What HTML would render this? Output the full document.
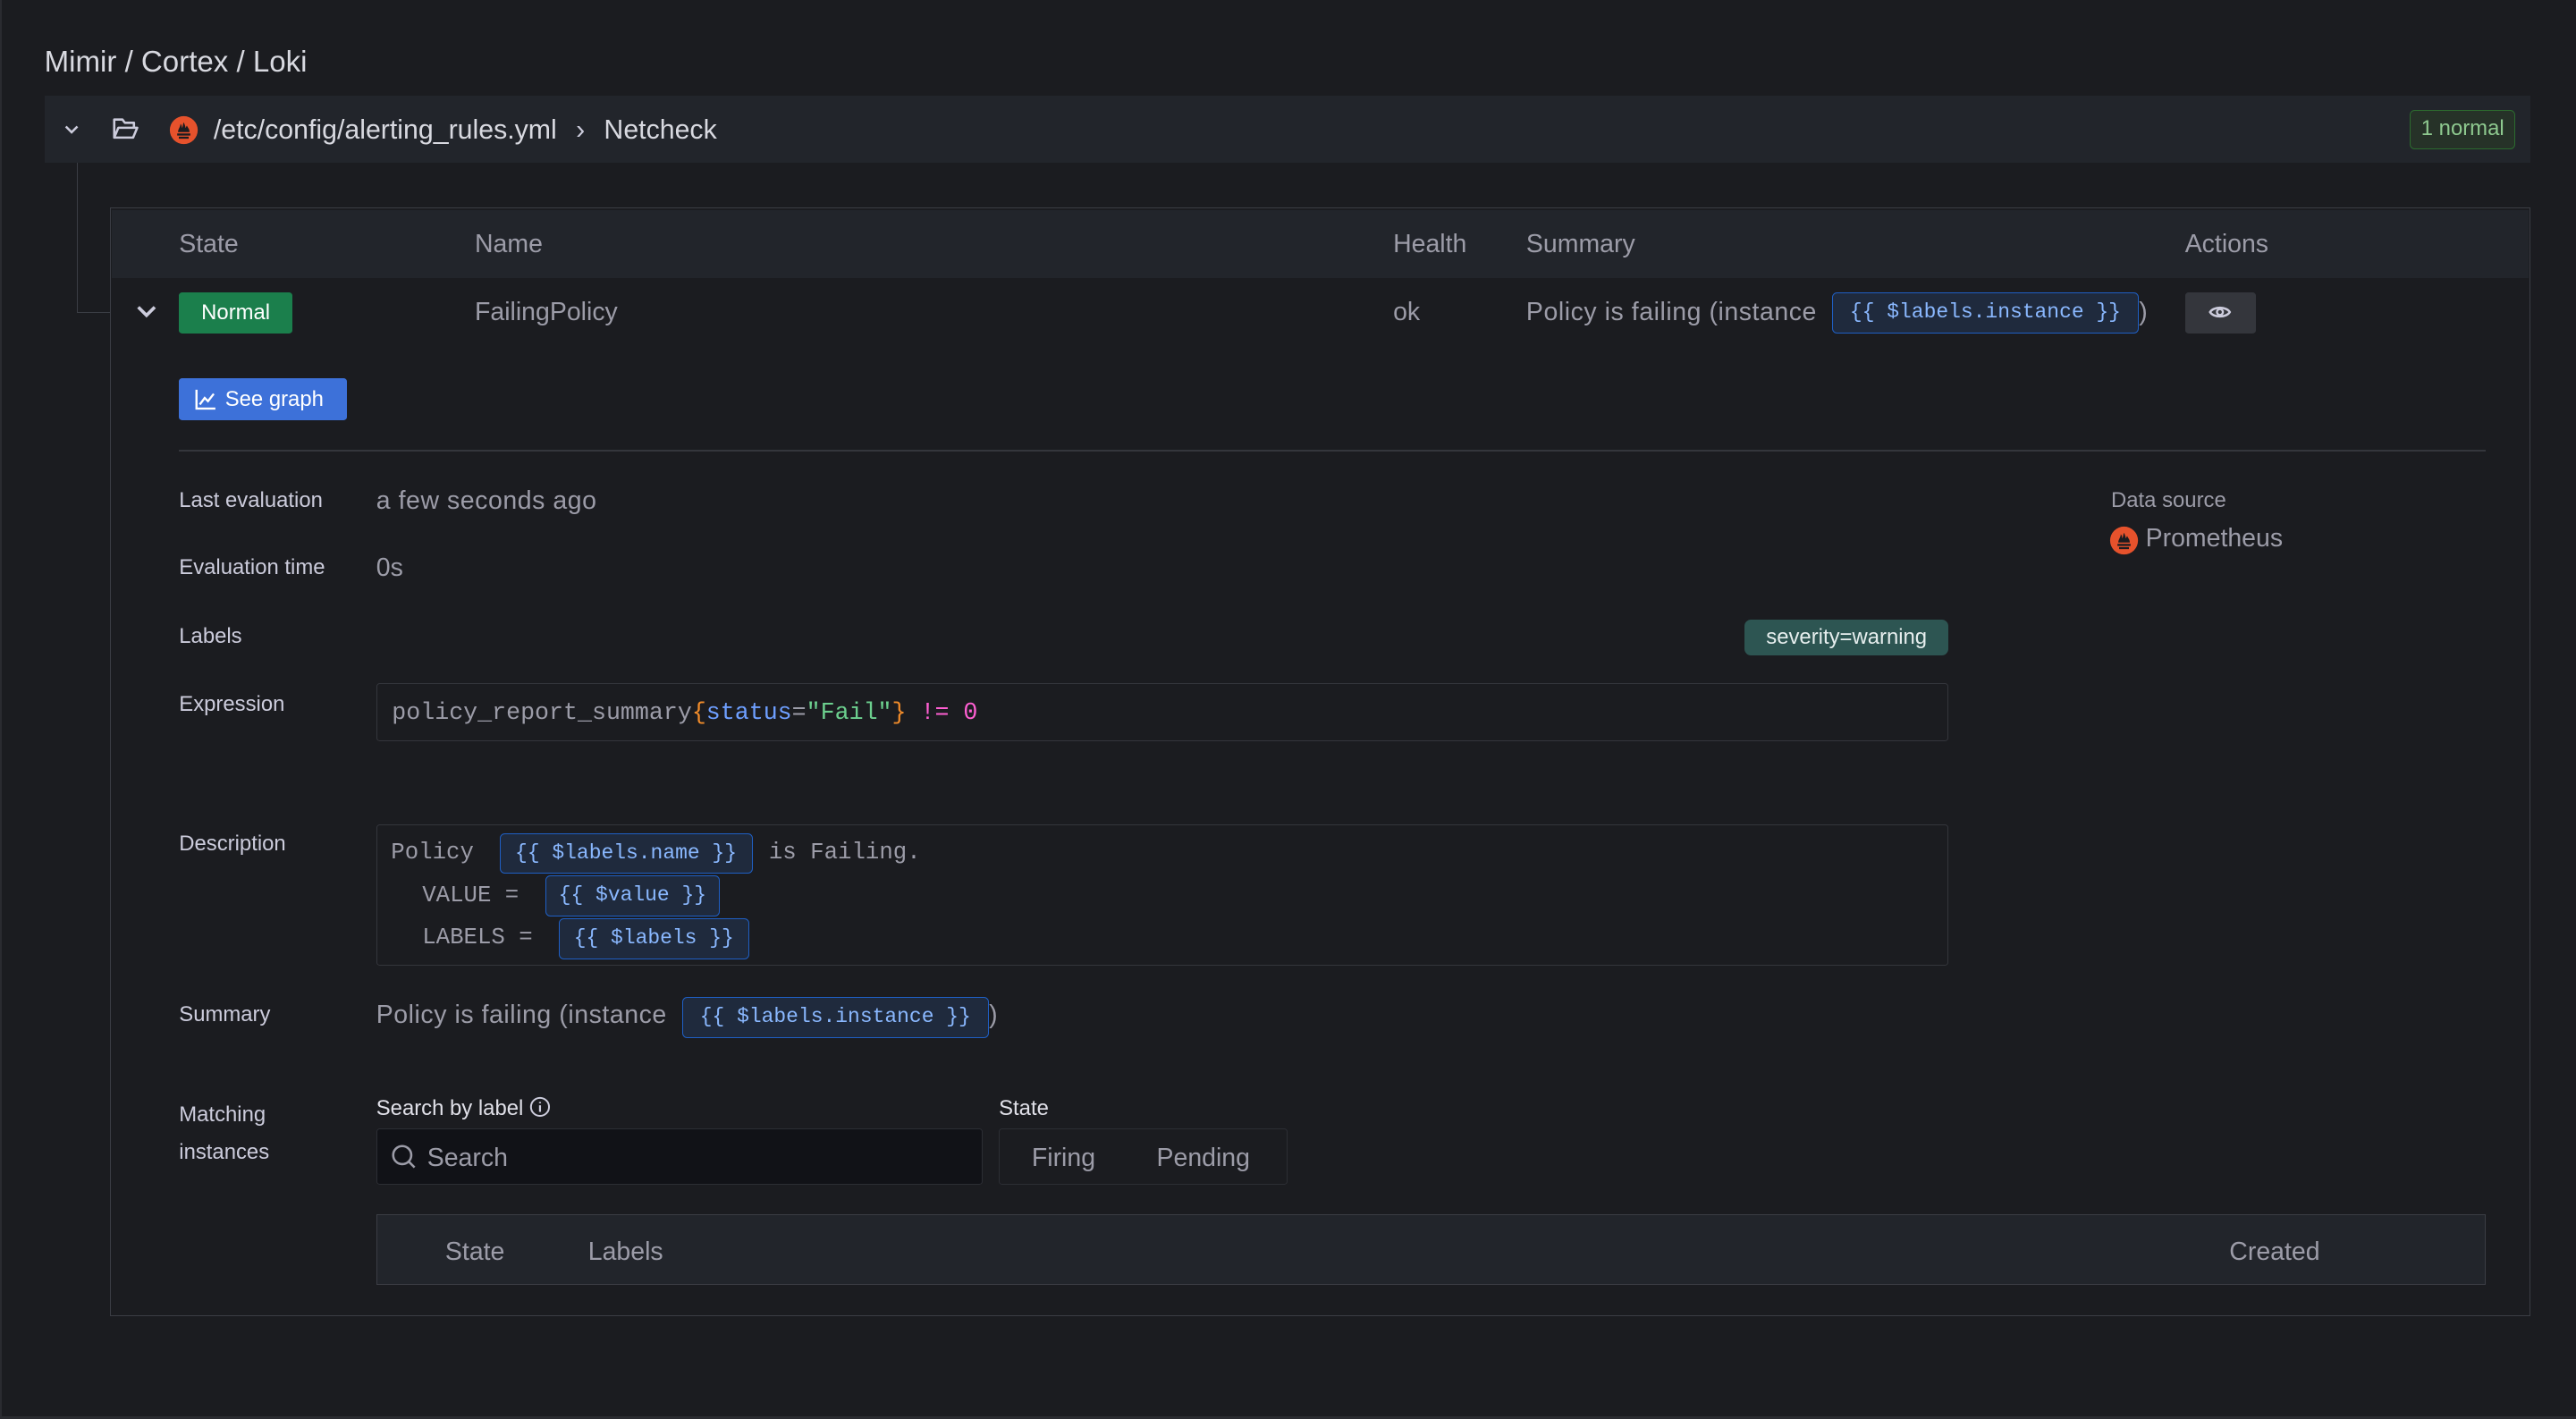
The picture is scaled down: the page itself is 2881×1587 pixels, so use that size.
<!DOCTYPE html>
<html><head><meta charset="utf-8"><style>
html,body{margin:0;padding:0;background:#1b1c20;overflow:hidden}
#root{position:relative;width:1568px;height:864px;zoom:1.83737;font-family:"Liberation Sans",sans-serif;color:#ccccdc;background:#1b1c20}
.a{position:absolute;white-space:nowrap}
.lbl{font-size:13px;color:#ccccdc}
.val{font-size:15.5px;color:#9c9ca8}
.hd{font-size:15.5px;color:#9c9ca8}
.mono{font-family:"Liberation Mono",monospace}
.chip{position:absolute;background:#1f2a3d;border:1px solid #1f5fc4;border-radius:3px;color:#8ab8ff;font-family:"Liberation Mono",monospace;font-size:12.5px;line-height:23px;height:25px;text-align:center;box-sizing:border-box;white-space:nowrap;overflow:hidden}
</style></head><body><div id="root">
<div class="a" style="left:0;top:0;width:1px;height:864px;background:#2a2b30"></div>
<div class="a" style="left:27px;top:28px;font-size:18px;color:#d8d9e0">Mimir / Cortex / Loki</div>
<div class="a" style="left:27px;top:58px;width:1513px;height:41px;background:#22252b"></div>
<svg class="a" style="left:38px;top:74px" width="11" height="10" viewBox="0 0 11 10"><path d="M2 3l3.5 3.5L9 3" stroke="#ccccdc" stroke-width="1.4" fill="none"/></svg>
<svg class="a" style="left:68px;top:71px" width="17" height="15" viewBox="0 0 17 15"><path d="M1.5 13V2h5l1.5 2h5.5v3M1.5 13l2.5-6h11.5l-2.5 6z" stroke="#ccccdc" stroke-width="1.4" fill="none" stroke-linejoin="round"/></svg>
<svg class="a" style="left:103px;top:70px" width="18" height="18" viewBox="0 0 18 18"><circle cx="9" cy="9" r="8.5" fill="#e6522c"/><path d="M5 11h8v1.3H5zM6 13h6v1.2H6zM5.5 10.2c0-2 1.5-3 1.5-5 1 1 .7 2 1 2.5.5-1 .4-2.5 1-3.5.5 1.5 1 2 1 3.5.5-.5.5-1 .9-1.5.6 1.5 1.6 2 1.6 4z" fill="#1b1c20"/></svg>
<div class="a" style="left:130px;top:70px;font-size:16.5px;color:#d8d9e0">/etc/config/alerting_rules.yml <span style="margin:0 7px;color:#ccccdc">›</span> Netcheck</div>
<div class="a" style="left:1467px;top:67px;width:64px;height:24px;box-sizing:border-box;border:1px solid #2c6b2f;background:#263228;border-radius:3px;color:#8ec98f;font-size:13px;line-height:22px;text-align:center">1 normal</div>
<div class="a" style="left:47px;top:99px;width:20px;height:91px;border-left:1px solid #3a3d44;border-bottom:1px solid #3a3d44"></div>
<div class="a" style="left:67px;top:126px;width:1473px;height:675px;box-sizing:border-box;border:1px solid #3b3d44"></div>
<div class="a" style="left:68px;top:128px;width:1471px;height:41px;background:#22252b"></div>
<div class="a hd" style="left:109px;top:140px">State</div>
<div class="a hd" style="left:289px;top:140px">Name</div>
<div class="a hd" style="left:848px;top:140px">Health</div>
<div class="a hd" style="left:929px;top:140px">Summary</div>
<div class="a hd" style="left:1330px;top:140px">Actions</div>
<svg class="a" style="left:82px;top:184px" width="14" height="12" viewBox="0 0 14 12"><path d="M2 3l5 5 5-5" stroke="#ccccdc" stroke-width="2" fill="none"/></svg>
<div class="a" style="left:109px;top:178px;width:69px;height:25px;background:#1b7f4c;border-radius:2px;color:#fff;font-size:13px;line-height:25px;text-align:center">Normal</div>
<div class="a val" style="left:289px;top:181px">FailingPolicy</div>
<div class="a val" style="left:848px;top:181px">ok</div>
<div class="a val" style="left:929px;top:181px;letter-spacing:0.3px">Policy is failing (instance</div>
<div class="chip" style="left:1115px;top:178px;width:187px">{{ $labels.instance }}</div>
<div class="a val" style="left:1302px;top:181px">)</div>
<div class="a" style="left:1330px;top:178px;width:43px;height:25px;background:#34363c;border-radius:2px"></div>
<svg class="a" style="left:1344px;top:184px" width="15" height="12" viewBox="0 0 15 12"><path d="M1.5 6c2-3.5 10-3.5 12 0-2 3.5-10 3.5-12 0z" stroke="#ccccdc" stroke-width="1.4" fill="none"/><circle cx="7.5" cy="6" r="1.8" stroke="#ccccdc" stroke-width="1.3" fill="none"/></svg>
<div class="a" style="left:109px;top:230px;width:102px;height:26px;background:#3d71d9;border-radius:2px;color:#fff;font-size:13px;line-height:26px"><svg style="position:absolute;left:9px;top:6px" width="14" height="14" viewBox="0 0 14 14"><path d="M1.5 1v11.5H13M3.5 10l3-4 2 2 3.5-4.5" stroke="#fff" stroke-width="1.3" fill="none"/></svg><span style="position:absolute;left:28px">See graph</span></div>
<div class="a" style="left:109px;top:274px;width:1404px;height:1px;background:#34363c"></div>
<div class="a lbl" style="left:109px;top:297px">Last evaluation</div>
<div class="a val" style="left:229px;top:296px;letter-spacing:0.3px">a few seconds ago</div>
<div class="a lbl" style="left:109px;top:338px">Evaluation time</div>
<div class="a val" style="left:229px;top:337px">0s</div>
<div class="a lbl" style="left:109px;top:380px">Labels</div>
<div class="a lbl" style="left:1285px;top:297px;color:#9c9ca8">Data source</div>
<svg class="a" style="left:1284px;top:320px" width="18" height="18" viewBox="0 0 18 18"><circle cx="9" cy="9" r="8.5" fill="#e6522c"/><path d="M5 11h8v1.3H5zM6 13h6v1.2H6zM5.5 10.2c0-2 1.5-3 1.5-5 1 1 .7 2 1 2.5.5-1 .4-2.5 1-3.5.5 1.5 1 2 1 3.5.5-.5.5-1 .9-1.5.6 1.5 1.6 2 1.6 4z" fill="#1b1c20"/></svg>
<div class="a val" style="left:1306px;top:319px">Prometheus</div>
<div class="a" style="left:1062px;top:377px;width:124px;height:22px;background:#2d5552;border-radius:4px;color:#e6eeee;font-size:13px;line-height:22px;text-align:center">severity=warning</div>
<div class="a lbl" style="left:109px;top:421px">Expression</div>
<div class="a mono" style="left:229px;top:416px;width:957px;height:35px;box-sizing:border-box;border:1px solid #34363c;border-radius:2px;font-size:14.5px;line-height:35px;padding-left:9px;color:#9c9ca8">policy_report_summary<span style="color:#f08b2a">{</span><span style="color:#6e9fff">status</span>=<span style="color:#6ccf8e">"Fail"</span><span style="color:#f08b2a">}</span> <span style="color:#ff5fd2">!= 0</span></div>
<div class="a lbl" style="left:109px;top:506px">Description</div>
<div class="a" style="left:229px;top:502px;width:957px;height:86px;box-sizing:border-box;border:1px solid #34363c;border-radius:2px"></div>
<div class="a mono val" style="left:238px;top:511px;font-size:14px">Policy</div>
<div class="chip" style="left:304px;top:507px;width:154px">{{ $labels.name }}</div>
<div class="a mono val" style="left:468px;top:511px;font-size:14px">is Failing.</div>
<div class="a mono val" style="left:257px;top:537px;font-size:14px">VALUE =</div>
<div class="chip" style="left:332px;top:533px;width:106px">{{ $value }}</div>
<div class="a mono val" style="left:257px;top:563px;font-size:14px">LABELS =</div>
<div class="chip" style="left:340px;top:559px;width:116px">{{ $labels }}</div>
<div class="a lbl" style="left:109px;top:610px">Summary</div>
<div class="a val" style="left:229px;top:609px;letter-spacing:0.3px">Policy is failing (instance</div>
<div class="chip" style="left:415px;top:607px;width:187px">{{ $labels.instance }}</div>
<div class="a val" style="left:602px;top:609px">)</div>
<div class="a lbl" style="left:109px;top:667px;line-height:23px">Matching<br>instances</div>
<div class="a" style="left:229px;top:667px;font-size:13px;color:#e0e0e8">Search by label <svg style="vertical-align:-2px" width="13" height="13" viewBox="0 0 13 13"><circle cx="6.5" cy="6.5" r="5.5" stroke="#ccccdc" stroke-width="1.1" fill="none"/><path d="M6.5 5.5v4M6.5 3.5v.8" stroke="#ccccdc" stroke-width="1.2"/></svg></div>
<div class="a" style="left:608px;top:667px;font-size:13px;color:#e0e0e8">State</div>
<div class="a" style="left:229px;top:687px;width:369px;height:34px;box-sizing:border-box;background:#111217;border:1px solid #2c2e34;border-radius:2px"></div>
<svg class="a" style="left:238px;top:696px" width="16" height="16" viewBox="0 0 16 16"><circle cx="7" cy="7" r="5.5" stroke="#9c9ca8" stroke-width="1.4" fill="none"/><path d="M11 11l3.5 3.5" stroke="#9c9ca8" stroke-width="1.4"/></svg>
<div class="a val" style="left:260px;top:696px">Search</div>
<div class="a" style="left:608px;top:687px;width:176px;height:34px;box-sizing:border-box;border:1px solid #2c2e34;border-radius:2px"></div>
<div class="a val" style="left:628px;top:696px">Firing</div>
<div class="a val" style="left:704px;top:696px">Pending</div>
<div class="a" style="left:229px;top:739px;width:1284px;height:43px;box-sizing:border-box;background:#22252b;border:1px solid #3b3d44"></div>
<div class="a hd" style="left:271px;top:753px">State</div>
<div class="a hd" style="left:358px;top:753px">Labels</div>
<div class="a hd" style="left:1357px;top:753px">Created</div>
<div class="a" style="left:0;top:862px;width:1568px;height:2px;background:#2a2b30"></div>
</div></body></html>
